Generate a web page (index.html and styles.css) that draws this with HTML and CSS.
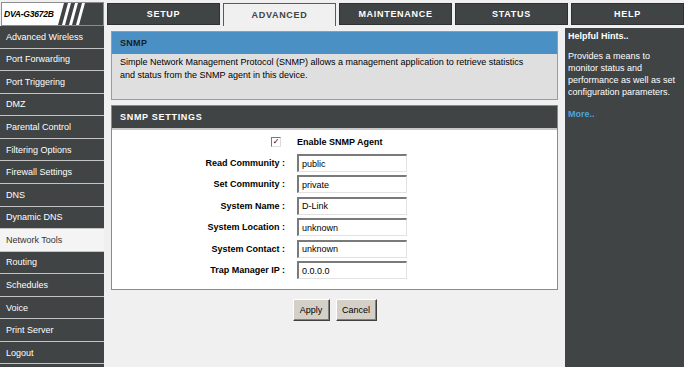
FILE: index.html
```html
<!DOCTYPE html>
<html lang="en">

<head>
    <meta charset="UTF-8">
    <meta name="viewport" content="width=device-width, initial-scale=1.0">
    <title>SNMP</title>
    <link rel="stylesheet" href="styles.css">
</head>

<body>

    <div class="top">
        <div class="logo">
            <span class="logo-text">DVA-G3672B</span>
            <svg class="logo-bars" width="48" height="22" viewBox="0 0 48 22">
                <polygon points="8,0 12,0 6,22 2,22" fill="#404445" />
                <polygon points="15,0 19,0 13,22 9,22" fill="#404445" />
                <polygon points="22,0 26,0 20,22 16,22" fill="#404445" />
                <polygon points="29,0 48,0 48,22 23,22" fill="#404445" />
            </svg>
        </div>
        <div class="tabs">
            <div class="tab">SETUP</div>
            <div class="tab active">ADVANCED</div>
            <div class="tab">MAINTENANCE</div>
            <div class="tab">STATUS</div>
            <div class="tab">HELP</div>
        </div>
    </div>

    <div class="main">
        <ul class="side">
            <li>Advanced Wireless</li>
            <li>Port Forwarding</li>
            <li>Port Triggering</li>
            <li>DMZ</li>
            <li>Parental Control</li>
            <li>Filtering Options</li>
            <li>Firewall Settings</li>
            <li>DNS</li>
            <li>Dynamic DNS</li>
            <li class="current">Network Tools</li>
            <li>Routing</li>
            <li>Schedules</li>
            <li>Voice</li>
            <li>Print Server</li>
            <li>Logout</li>
        </ul>

        <div class="content">
            <div class="infobox">
                <div class="infobox-title">SNMP</div>
                <p class="infobox-text">Simple Network Management Protocol (SNMP) allows a management application to retrieve statistics and status from the SNMP agent in this device.</p>
            </div>

            <div class="box">
                <div class="box-title">SNMP SETTINGS</div>
                <div class="form">
                    <div class="form-row">
                        <span class="check-cell"><span class="check">&#10003;</span></span>
                        <span class="check-label">Enable SNMP Agent</span>
                    </div>
                    <div class="form-row">
                        <label>Read Community :</label>
                        <span class="field">public</span>
                    </div>
                    <div class="form-row">
                        <label>Set Community :</label>
                        <span class="field">private</span>
                    </div>
                    <div class="form-row">
                        <label>System Name :</label>
                        <span class="field">D-Link</span>
                    </div>
                    <div class="form-row">
                        <label>System Location :</label>
                        <span class="field">unknown</span>
                    </div>
                    <div class="form-row">
                        <label>System Contact :</label>
                        <span class="field">unknown</span>
                    </div>
                    <div class="form-row">
                        <label>Trap Manager IP :</label>
                        <span class="field">0.0.0.0</span>
                    </div>
                </div>
            </div>

            <div class="buttons">
                <button class="btn btn-apply">Apply</button>
                <button class="btn btn-cancel">Cancel</button>
            </div>
        </div>

        <div class="help">
            <div class="help-title">Helpful Hints..</div>
            <p class="help-text">Provides a means to monitor status and performance as well as set configuration parameters.</p>
            <div class="help-more">More..</div>
        </div>
    </div>

</body>

</html>
```

FILE: styles.css
```css
body {
    margin: 0;
    background-color: #f0f0f0;
    font-family: "Liberation Sans", Arial, sans-serif;
    font-size: 9px;
    color: #000;
    width: 684px;
    height: 367px;
    overflow: hidden;
}

/* header row */
.top {
    display: flex;
    height: 26px;
}

.logo {
    box-sizing: border-box;
    width: 103px;
    height: 24px;
    margin: 2px 0 0 1px;
    border: 1px solid #8c8c8c;
    background-color: #fff;
    display: flex;
    align-items: center;
    overflow: hidden;
}

.logo-text {
    font-weight: bold;
    font-style: italic;
    font-size: 8.5px;
    padding-left: 2px;
    letter-spacing: -0.2px;
    width: 52px;
    flex-shrink: 0;
}

.logo-bars {
    flex-shrink: 0;
}

.tabs {
    display: flex;
    gap: 3px;
    margin-left: 3px;
    padding-top: 3px;
}

.tab {
    box-sizing: border-box;
    width: 113px;
    height: 22px;
    background-color: #404445;
    border: 1px solid #2e3132;
    color: #fff;
    font-weight: bold;
    letter-spacing: 0.7px;
    display: flex;
    align-items: center;
    justify-content: center;
}

.tab.active {
    background-color: #f0f0f0;
    color: #404445;
    border-color: #5a5a5a;
    border-bottom: none;
    height: 23px;
}

/* main row */
.main {
    display: flex;
    height: 341px;
}

.side {
    list-style: none;
    margin: 0;
    padding: 0;
    width: 104px;
    background-color: #404445;
}

.side li {
    box-sizing: border-box;
    height: 22.57px;
    border-bottom: 1px solid #c4c4c4;
    color: #fff;
    padding-left: 6px;
    display: flex;
    align-items: center;
}

.side li.current {
    background-color: #f4f4f4;
    color: #333;
}

.content {
    width: 461px;
    box-sizing: border-box;
    padding: 5px 7px 0 7px;
}

.infobox {
    border: 1px solid #6aa8d6;
    background-color: #dfdfdf;
    height: 69px;
    box-sizing: border-box;
}

.infobox-title {
    background-color: #4a90c4;
    height: 22px;
    line-height: 22px;
    padding-left: 8px;
    font-weight: bold;
    color: #1c1c1c;
    letter-spacing: 0.3px;
}

.infobox-text {
    margin: 0;
    padding: 2px 22px 0 8px;
    line-height: 13px;
}

.box {
    margin-top: 5px;
    border: 1px solid #8a8a8a;
    background-color: #fff;
    height: 185px;
    box-sizing: border-box;
}

.box-title {
    background-color: #404445;
    color: #fff;
    font-weight: bold;
    letter-spacing: 0.7px;
    height: 22px;
    line-height: 22px;
    padding-left: 8px;
    border-bottom: 2px solid #c8c8c8;
}

.form {
    padding-top: 1px;
}

.form-row {
    display: grid;
    grid-template-columns: 180px 1fr;
    align-items: center;
    height: 21.4px;
}

.form-row label {
    text-align: right;
    font-weight: bold;
    padding-right: 7px;
}

.check-cell {
    display: flex;
    justify-content: flex-end;
    padding-right: 11px;
}

.check {
    box-sizing: border-box;
    width: 10px;
    height: 10px;
    border: 1px solid #777;
    border-right-color: #ddd;
    border-bottom-color: #ddd;
    background-color: #fff;
    font-size: 8px;
    line-height: 8px;
    text-align: center;
    font-family: "DejaVu Sans", sans-serif;
}

.check-label {
    font-weight: bold;
    margin-left: 5px;
}

.field {
    box-sizing: border-box;
    width: 110px;
    height: 18px;
    margin-left: 5px;
    border: 1px solid #e2e2e2;
    border-top: 2px solid #7a7a7a;
    border-left: 2px solid #7a7a7a;
    background-color: #fff;
    padding-left: 3px;
    display: flex;
    align-items: center;
}

.buttons {
    display: flex;
    justify-content: center;
    gap: 6px;
    margin-top: 9px;
}

.btn {
    box-sizing: border-box;
    height: 22px;
    background-color: #d4d0c8;
    border: 1px solid #fff;
    border-right-color: #404040;
    border-bottom-color: #404040;
    box-shadow: inset -1px -1px 0 #808080;
    font-family: "Liberation Sans", Arial, sans-serif;
    font-size: 9px;
    color: #000;
    padding: 0;
}

.btn-apply {
    width: 37px;
}

.btn-cancel {
    width: 41px;
}

/* help column */
.help {
    width: 119px;
    margin-top: 2px;
    background-color: #404445;
    color: #fff;
    padding: 2px 3px 0 3px;
    box-sizing: border-box;
}

.help-title {
    font-weight: bold;
    line-height: 12px;
}

.help-text {
    margin: 8px 0 0 0;
    line-height: 12px;
}

.help-more {
    margin-top: 11px;
    font-weight: bold;
    color: #4fa3dc;
}
```
